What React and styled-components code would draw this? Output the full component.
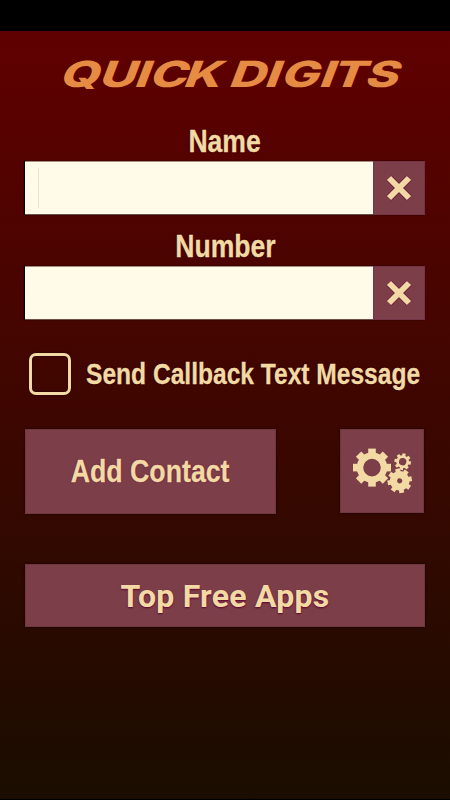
import styled, { createGlobalStyle } from "styled-components";

const GlobalStyle = createGlobalStyle`
  * {
    box-sizing: border-box;
  }
  body {
    margin: 0;
    background-color: #000000;
  }
`;

const Screen = styled.div`
  display: flex;
  flex-direction: column;
  width: 450px;
  height: 800px;
  overflow: hidden;
  background-color: #000000;
`;
const StatusBar = styled.div`
  height: 31px;
`;
const Main = styled.main`
  display: flex;
  flex-direction: column;
  height: 768px;
  padding: 0 25px;
  color: #f3d9a4;
  font-family: "Liberation Sans", Arial, sans-serif;
  font-weight: 700;
  background: linear-gradient(#600000, #1a0d00);
`;
const Title = styled.h1`
  height: 95px;
  margin: 0 -25px;
`;
const Condensed = styled.span`
  display: inline-block;
  white-space: nowrap;
  transform: scaleX(${({ $scale }) => $scale});
  transform-origin: ${({ $origin }) => $origin || "center"};
  text-shadow: 0 0 2px ${({ $shadow }) => $shadow || "#1c0000"};
  -webkit-text-stroke: 0.3px #f3d9a4;
`;
const Field = styled.div`
  display: flex;
  flex-direction: column;
  height: 105px;
`;
const FieldLabel = styled.label`
  height: 35px;
  font-size: 32px;
  line-height: 31px;
  text-align: center;
`;
const InputRow = styled.div`
  display: flex;
  height: 54px;
  border-top: 1px solid #a98e80;
  border-bottom: 1px solid #6b5145;
  box-shadow: -1px 0 1px #000000;
`;
const Input = styled.input`
  width: 348px;
  padding: 0 14px;
  border: none;
  outline: none;
  font-size: 28px;
  background: ${({ $caret }) =>
    $caret
      ? "linear-gradient(#e9e4cf, #e9e4cf) 13px 6px / 1px 40px no-repeat #fffbe8"
      : "#fffbe8"};
`;
const ClearButton = styled.button`
  display: flex;
  justify-content: center;
  align-items: center;
  width: 52px;
  margin: -1px 0;
  padding: 0;
  border: 1px solid #743347;
  background-color: #7c3f49;
`;
const CheckRow = styled.label`
  display: flex;
  align-items: center;
  height: 42px;
  margin: 17px 0 34px 4px;
  font-size: 30px;
`;
const CheckBox = styled.span`
  width: 42px;
  height: 42px;
  margin-right: 15px;
  flex-shrink: 0;
  border: 3px solid #f3d9a4;
  border-radius: 7px;
  box-shadow: 0 0 2px #140000, inset 0 0 2px #140000;
`;
const ActionRow = styled.div`
  display: flex;
  justify-content: space-between;
  align-items: flex-start;
  height: 85px;
  margin-bottom: 50px;
`;
const Button = styled.button`
  display: flex;
  justify-content: center;
  align-items: center;
  width: ${({ $width }) => $width};
  height: ${({ $height }) => $height};
  padding: 0;
  border: 1px solid #703740;
  color: inherit;
  font: inherit;
  font-size: 32px;
  background-color: #7c3f49;
  box-shadow: 0 0 2px #120000;
`;
const SettingsButton = styled(Button)`
  margin-right: 1px;
`;
const AppsLabel = styled.span`
  font-family: Roboto, sans-serif;
  font-size: 32px;
  letter-spacing: 0.25px;
  padding-top: 1px;
  text-shadow: 0 1px 2px #600030;
`;

const Logo = () => (
  <svg width="450" height="95" viewBox="0 31 450 95">
    <g
      fill="#e58b43"
      fontFamily="Inter, sans-serif"
      fontSize="36"
      fontWeight="800"
      transform="translate(0 87) skewX(-21) scale(1.4 1)"
    >
      <text x="41.5 69.5 95 105.5 130">QUICK</text>
      <text x="162.5 188 199.5 227 235.5 259.5">DIGITS</text>
    </g>
  </svg>
);

const Cross = () => (
  <svg width="26" height="26" viewBox="0 0 26 26">
    <path d="M3 3 23 23M23 3 3 23" stroke="#650739" strokeWidth="7" />
    <path d="M3 3 23 23M23 3 3 23" stroke="#f3d9a4" strokeWidth="6" />
  </svg>
);

const Gear = ({ cx, cy, outer, body, hole, tooth, angle = 0 }) => (
  <g transform={`translate(${cx} ${cy}) rotate(${angle})`}>
    <circle
      r={(body + hole) / 2}
      fill="none"
      stroke="#f3d9a4"
      strokeWidth={body - hole}
    />
    {[0, 45, 90, 135, 180, 225, 270, 315].map((turn) => (
      <rect
        key={turn}
        x={-tooth / 2}
        y={-outer}
        width={tooth}
        height={outer - body + 1.5}
        fill="#f3d9a4"
        transform={`rotate(${turn})`}
      />
    ))}
  </g>
);

const Gears = () => (
  <svg width="82" height="82" viewBox="341 430 82 82">
    <Gear cx={372} cy={467.6} outer={19} body={15.2} hole={8.8} tooth={7.6} />
    <Gear
      cx={402.7}
      cy={461.7}
      outer={8.3}
      body={6.4}
      hole={3.7}
      tooth={3.2}
      angle={10}
    />
    <Gear
      cx={399.7}
      cy={480.8}
      outer={12.2}
      body={9.8}
      hole={2.6}
      tooth={4.8}
      angle={-10}
    />
  </svg>
);

const TextField = ({ id, label, scale, caret }) => (
  <Field>
    <FieldLabel htmlFor={id}>
      <Condensed $scale={scale}>{label}</Condensed>
    </FieldLabel>
    <InputRow>
      <Input id={id} $caret={caret} />
      <ClearButton aria-label="Clear">
        <Cross />
      </ClearButton>
    </InputRow>
  </Field>
);

const App = () => {
  return (
    <>
      <GlobalStyle />
      <Screen>
        <StatusBar />
        <Main>
          <Title>
            <Logo />
          </Title>
          <TextField id="name" label="Name" scale={0.83} caret />
          <TextField id="number" label="Number" scale={0.83} />
          <CheckRow>
            <CheckBox />
            <Condensed $scale={0.819} $origin="left">
              Send Callback Text Message
            </Condensed>
          </CheckRow>
          <ActionRow>
            <Button $width="251px" $height="85px">
              <Condensed $scale={0.835} $shadow="#600030">
                Add Contact
              </Condensed>
            </Button>
            <SettingsButton $width="84px" $height="84px" aria-label="Settings">
              <Gears />
            </SettingsButton>
          </ActionRow>
          <Button $width="400px" $height="63px">
            <AppsLabel>Top Free Apps</AppsLabel>
          </Button>
        </Main>
      </Screen>
    </>
  );
};
export default App;
